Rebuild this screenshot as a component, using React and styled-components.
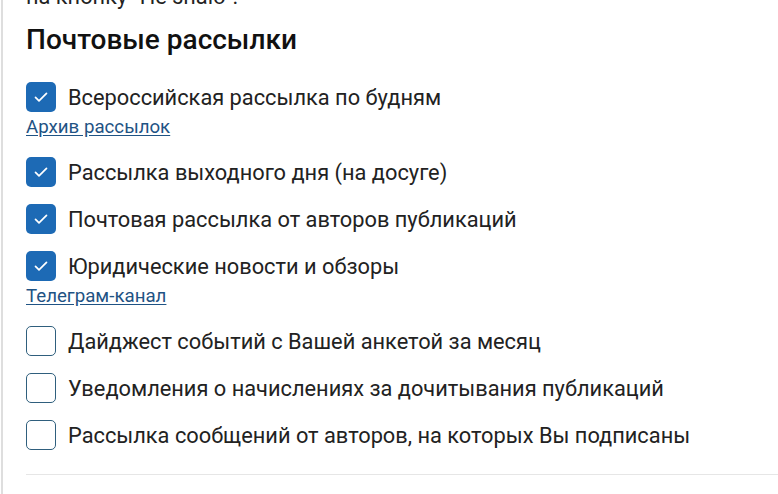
import React from 'react'
import styled, { createGlobalStyle } from 'styled-components'

const GlobalStyle = createGlobalStyle`
  html, body {
    margin: 0;
    padding: 0;
    background: #fff;
    overflow: hidden;
  }
  body {
    font-family: Roboto, "Liberation Sans", sans-serif;
    color: #222;
  }
`

const Panel = styled.div`
  height: 494px;
  box-sizing: border-box;
  border-left: 2px solid #dedede;
  margin-left: 1px;
  padding: 0 0 0 23px;
  overflow: hidden;
`

const Lead = styled.p`
  margin: -15px 0 0;
  font-size: 21.8px;
  line-height: 24px;
  color: #222;
`

const Title = styled.h2`
  margin: 14px 0 25px;
  font-size: 28px;
  line-height: 34px;
  font-weight: 500;
  color: #111;
`

const List = styled.div`
  display: flex;
  flex-direction: column;
`

const Row = styled.label`
  display: flex;
  align-items: center;
  gap: 12px;
  height: 30px;
  margin-bottom: ${p => (p.$tight ? '4px' : '17px')};
  font-size: 21.8px;
  color: #222;
  cursor: pointer;
`

const Box = styled.span`
  flex: none;
  position: relative;
  width: 30px;
  height: 30px;
  box-sizing: border-box;
  border-radius: 5px;
  background: ${p => (p.$checked ? '#1d6ab5' : '#fff')};
  border: ${p => (p.$checked ? 'none' : '1.5px solid #2f5f7d')};

  svg {
    position: absolute;
    inset: 0;
  }
`

const SubLink = styled.a`
  display: block;
  margin: 0 0 19px;
  font-size: 18.7px;
  line-height: 22px;
  color: #1f5384;
  text-decoration: underline;
  text-underline-offset: 2px;
  width: max-content;
`

const Divider = styled.hr`
  margin: 7px 0 0;
  border: none;
  border-top: 1px solid #e6e6e6;
`

const Check = () => (
  <svg width="30" height="30" viewBox="0 0 30 30" fill="none">
    <path d="M9.5 15.3 L13 18.8 L20.5 11.3" stroke="#fff" strokeWidth="1.7" strokeLinecap="round" strokeLinejoin="round" />
  </svg>
)

const items = [
  { text: 'Всероссийская рассылка по будням', checked: true, link: 'Архив рассылок' },
  { text: 'Рассылка выходного дня (на досуге)', checked: true },
  { text: 'Почтовая рассылка от авторов публикаций', checked: true },
  { text: 'Юридические новости и обзоры', checked: true, link: 'Телеграм-канал' },
  { text: 'Дайджест событий с Вашей анкетой за месяц', checked: false },
  { text: 'Уведомления о начислениях за дочитывания публикаций', checked: false },
  { text: 'Рассылка сообщений от авторов, на которых Вы подписаны', checked: false }
]

export default function App() {
  return (
    <>
      <GlobalStyle />
      <Panel>
        <Lead>на кнопку "Не знаю".</Lead>
        <Title>Почтовые рассылки</Title>
        <List>
          {items.map(item => (
            <React.Fragment key={item.text}>
              <Row $tight={!!item.link}>
                <Box $checked={item.checked}>{item.checked && <Check />}</Box>
                {item.text}
              </Row>
              {item.link && <SubLink href="#">{item.link}</SubLink>}
            </React.Fragment>
          ))}
        </List>
        <Divider />
      </Panel>
    </>
  )
}
